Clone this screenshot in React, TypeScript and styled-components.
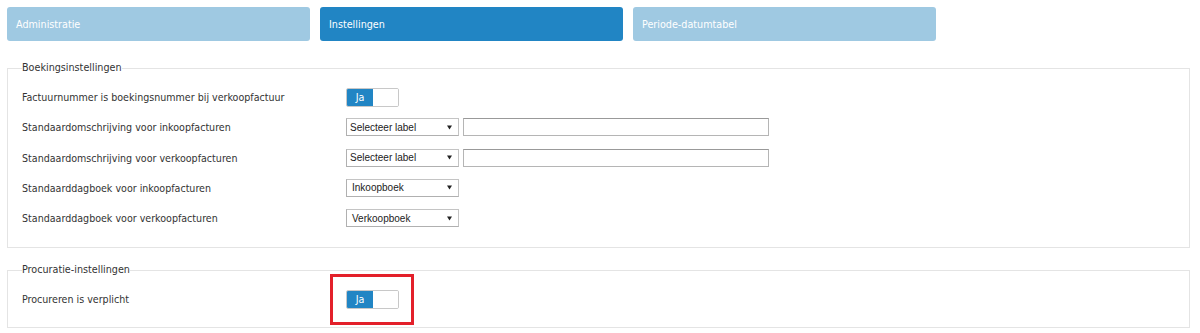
import styled, { createGlobalStyle } from 'styled-components';

const GlobalStyle = createGlobalStyle`
  html, body {
    margin: 0;
    padding: 0;
    background: #ffffff;
  }
  body {
    font-family: "DejaVu Sans Condensed", "DejaVu Sans", Tahoma, sans-serif;
    font-size: 10.6px;
    color: #333333;
  }
`;

const Page = styled.div`
  padding: 7px 10px 0 7px;
`;

const Tabs = styled.nav`
  display: flex;
  gap: 10px;
`;

const Tab = styled.div<{ $active?: boolean }>`
  width: 303px;
  height: 34px;
  display: flex;
  align-items: center;
  padding-left: 9px;
  box-sizing: border-box;
  border-radius: 3px;
  background: ${p => (p.$active ? '#2185c4' : '#9fc9e2')};
  color: #ffffff;
  font-size: 10.7px;
`;

const Fieldset = styled.fieldset<{ $top: number; $bottom: number }>`
  margin: ${p => p.$top}px 0 0 0;
  padding: 0 14px ${p => p.$bottom}px 14px;
  border: 1px solid #e4e4e4;
  min-width: 0;
`;

const Legend = styled.legend`
  padding: 0;
  font-size: 10.7px;
  line-height: 14px;
  color: #333333;
`;

const Rows = styled.div`
  display: grid;
  grid-template-columns: 324px 1fr;
  grid-auto-rows: 30.25px;
  align-items: center;
  margin-top: 7px;
`;

const Label = styled.div`
  font-size: 10.6px;
  color: #333333;
`;

const Controls = styled.div`
  display: flex;
  align-items: center;
  gap: 4px;
`;

const ToggleCell = styled.div`
  position: relative;
  display: inline-flex;
`;

const Toggle = styled.div`
  display: flex;
  width: 53px;
  height: 19px;
  box-sizing: border-box;
  border: 1px solid #c8c8c8;
  border-radius: 2px;
  overflow: hidden;
`;

const ToggleOn = styled.span`
  width: 26px;
  display: flex;
  align-items: center;
  justify-content: center;
  background: #2185c4;
  color: #ffffff;
  font-size: 10.7px;
`;

const ToggleOff = styled.span`
  flex: 1;
  background: #ffffff;
`;

const Highlight = styled.span`
  position: absolute;
  left: -16px;
  top: -16px;
  right: -15px;
  bottom: -16px;
  border: 3px solid #e3202a;
  pointer-events: none;
`;

const SelectBox = styled.div<{ $inset: number }>`
  width: 113px;
  height: 18px;
  box-sizing: border-box;
  display: flex;
  align-items: center;
  justify-content: space-between;
  padding: 0 6px 0 ${p => p.$inset}px;
  border: 1px solid #c4c4c4;
  border-left-color: #b0b0b0;
  border-bottom-color: #b0b0b0;
  background: #ffffff;
  font-family: "Liberation Sans", Arial, sans-serif;
  font-size: 10px;
  color: #222222;
`;

const TextInput = styled.div`
  width: 306px;
  height: 18px;
  box-sizing: border-box;
  border: 1px solid #b5b5b5;
  border-top-color: #999999;
  background: #ffffff;
`;

const Arrow = () => (
  <svg width="5" height="5" viewBox="0 0 5 5">
    <path d="M0 0.5 H5 L2.5 4.5 Z" fill="#222" />
  </svg>
);

const Select = ({ value, inset = 3 }: { value: string; inset?: number }) => (
  <SelectBox $inset={inset}>
    <span>{value}</span>
    <Arrow />
  </SelectBox>
);

const Switch = ({ highlighted }: { highlighted?: boolean }) => (
  <ToggleCell>
    <Toggle>
      <ToggleOn>Ja</ToggleOn>
      <ToggleOff />
    </Toggle>
    {highlighted && <Highlight />}
  </ToggleCell>
);

const App = () => {
  const tabs = [
    { title: 'Administratie', active: false },
    { title: 'Instellingen', active: true },
    { title: 'Periode-datumtabel', active: false }
  ];

  return (
    <Page>
      <GlobalStyle />
      <Tabs>
        {tabs.map(tab => (
          <Tab key={tab.title} $active={tab.active}>{tab.title}</Tab>
        ))}
      </Tabs>

      <Fieldset $top={20} $bottom={14}>
        <Legend>Boekingsinstellingen</Legend>
        <Rows>
          <Label>Factuurnummer is boekingsnummer bij verkoopfactuur</Label>
          <Controls>
            <Switch />
          </Controls>

          <Label>Standaardomschrijving voor inkoopfacturen</Label>
          <Controls>
            <Select value="Selecteer label" />
            <TextInput />
          </Controls>

          <Label>Standaardomschrijving voor verkoopfacturen</Label>
          <Controls>
            <Select value="Selecteer label" />
            <TextInput />
          </Controls>

          <Label>Standaarddagboek voor inkoopfacturen</Label>
          <Controls>
            <Select value="Inkoopboek" inset={5} />
          </Controls>

          <Label>Standaarddagboek voor verkoopfacturen</Label>
          <Controls>
            <Select value="Verkoopboek" inset={5} />
          </Controls>
        </Rows>
      </Fieldset>

      <Fieldset $top={15} $bottom={12}>
        <Legend>Procuratie-instellingen</Legend>
        <Rows>
          <Label>Procureren is verplicht</Label>
          <Controls>
            <Switch highlighted />
          </Controls>
        </Rows>
      </Fieldset>
    </Page>
  );
};

export default App;
